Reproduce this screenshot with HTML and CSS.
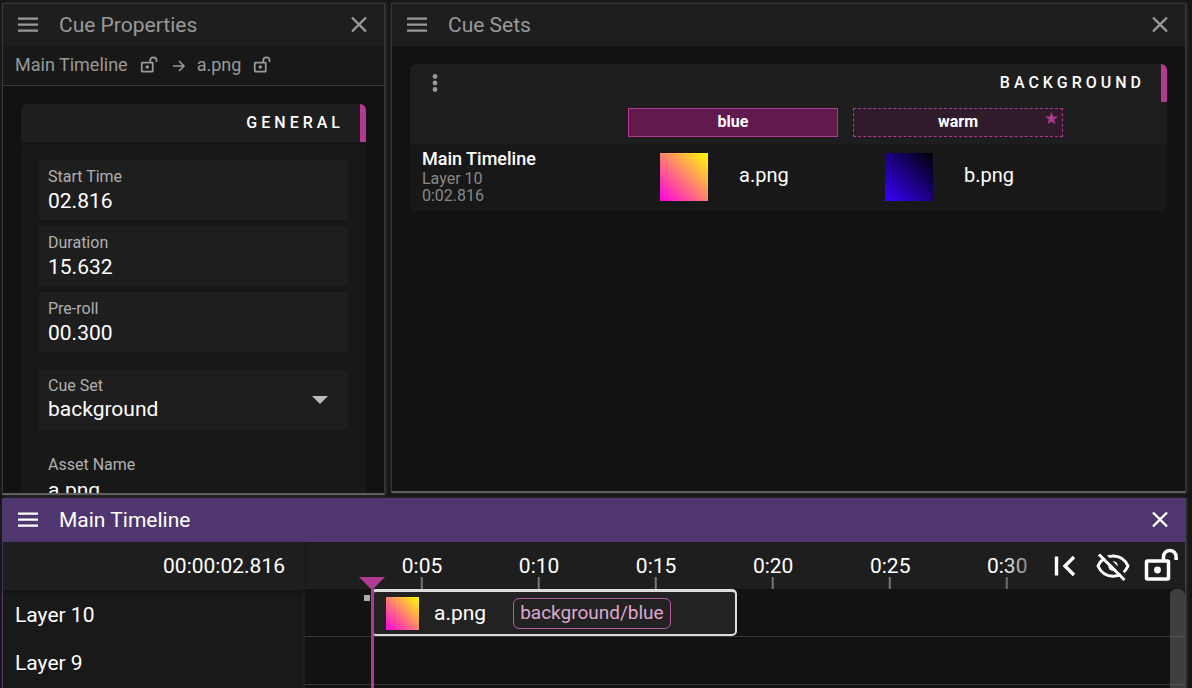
FILE: index.html
```html
<!DOCTYPE html>
<html lang="en">
<head>
    <meta charset="UTF-8">
    <meta name="viewport" content="width=device-width, initial-scale=1.0">
    <title>Main Timeline</title>
    <link rel="stylesheet" href="styles.css">
</head>
<body>
    <svg class="defs" aria-hidden="true">
        <symbol id="icon-menu" viewBox="0 0 24 24">
            <path d="M2 4.500h20v2.200H2zM2 10.500h20v2.200H2zM2 16.500h20v2.200H2z" fill="currentColor"/>
        </symbol>
        <symbol id="icon-close" viewBox="0 0 24 24">
            <path d="M5 4.500l14 14M19 4.500L5 18.500" fill="none" stroke="currentColor" stroke-width="2.400"/>
        </symbol>
        <symbol id="icon-unlock" viewBox="0 0 36 36">
            <rect x="3.500" y="13" width="22" height="18" rx="1" fill="none" stroke="currentColor" stroke-width="3.500"/>
            <circle cx="14.500" cy="22" r="3.400" fill="currentColor"/>
            <path d="M20.500 13V8.800a6.300 6.300 0 0 1 12.600 0V12" fill="none" stroke="currentColor" stroke-width="3.500"/>
        </symbol>
    </svg>

    <main class="workspace">
        <section class="panel cue-properties">
            <header class="panel-header">
                <button class="icon-button" aria-label="Menu"><svg><use href="#icon-menu"/></svg></button>
                <h2>Cue Properties</h2>
                <button class="icon-button" aria-label="Close"><svg><use href="#icon-close"/></svg></button>
            </header>
            <nav class="breadcrumb">
                <a href="#timeline">Main Timeline</a>
                <button class="lock-button" aria-label="Lock timeline"><svg><use href="#icon-unlock"/></svg></button>
                <svg class="arrow" viewBox="0 0 14 14"><path d="M1 7h11M7 2l5 5-5 5" fill="none" stroke="currentColor" stroke-width="1.600"/></svg>
                <a href="#cue">a.png</a>
                <button class="lock-button" aria-label="Lock cue"><svg><use href="#icon-unlock"/></svg></button>
            </nav>
            <div class="panel-body">
                <form class="card general">
                    <h3 class="card-header">General</h3>
                    <div class="fields">
                        <div class="field">
                            <label for="startTime">Start Time</label>
                            <input type="text" id="startTime" value="02.816">
                        </div>
                        <div class="field">
                            <label for="duration">Duration</label>
                            <input type="text" id="duration" value="15.632">
                        </div>
                        <div class="field">
                            <label for="preRoll">Pre-roll</label>
                            <input type="text" id="preRoll" value="00.300">
                        </div>
                        <div class="field select-field">
                            <label for="cueSet">Cue Set</label>
                            <select id="cueSet">
                                <option>background</option>
                            </select>
                            <svg class="caret" viewBox="0 0 16 8"><path d="M0 0h16l-8 8z" fill="currentColor"/></svg>
                        </div>
                        <div class="field plain">
                            <label for="assetName">Asset Name</label>
                            <input type="text" id="assetName" value="a.png" readonly>
                        </div>
                    </div>
                </form>
            </div>
        </section>

        <section class="panel cue-sets">
            <header class="panel-header">
                <button class="icon-button" aria-label="Menu"><svg><use href="#icon-menu"/></svg></button>
                <h2>Cue Sets</h2>
                <button class="icon-button" aria-label="Close"><svg><use href="#icon-close"/></svg></button>
            </header>
            <div class="panel-body">
                <div class="card">
                    <div class="card-header">
                        <button class="more-button" aria-label="More">
                            <svg viewBox="0 0 6 18"><g fill="currentColor"><circle cx="3" cy="2.500" r="2.400"/><circle cx="3" cy="9" r="2.400"/><circle cx="3" cy="15.500" r="2.400"/></g></svg>
                        </button>
                        <h3>Background</h3>
                    </div>
                    <table>
                        <thead>
                            <tr>
                                <th class="col-cue"></th>
                                <th class="col-variant"><button class="variant active">blue</button></th>
                                <th class="col-variant">
                                    <button class="variant">warm
                                        <svg class="star" viewBox="0 0 14 14"><path d="M7 0l1.700 4.900H14L9.800 8l1.600 5.300L7 10.200l-4.400 3.100L4.200 8 0 4.900h5.300z" fill="currentColor"/></svg>
                                    </button>
                                </th>
                                <th></th>
                            </tr>
                        </thead>
                        <tbody>
                            <tr>
                                <td class="cue">
                                    <strong>Main Timeline</strong>
                                    <span>Layer 10</span>
                                    <span>0:02.816</span>
                                </td>
                                <td><div class="asset"><span class="thumb thumb-a"></span><span class="asset-name">a.png</span></div></td>
                                <td><div class="asset"><span class="thumb thumb-b"></span><span class="asset-name">b.png</span></div></td>
                                <td></td>
                            </tr>
                        </tbody>
                    </table>
                </div>
            </div>
        </section>

        <section class="panel timeline" id="timeline">
            <header class="panel-header">
                <button class="icon-button" aria-label="Menu"><svg><use href="#icon-menu"/></svg></button>
                <h2>Main Timeline</h2>
                <button class="icon-button" aria-label="Close"><svg><use href="#icon-close"/></svg></button>
            </header>
            <div class="timeline-body">
                <div class="layers">
                    <div class="clock">00:00:02.816</div>
                    <div class="layer-name">Layer 10</div>
                    <div class="layer-name">Layer 9</div>
                </div>
                <div class="tracks">
                    <!-- positions are seconds out of the visible 37.6 -->
                    <div class="ruler">
                        <span class="tick" style="left: 13.3%">0:05</span>
                        <span class="tick" style="left: 26.6%">0:10</span>
                        <span class="tick" style="left: 39.9%">0:15</span>
                        <span class="tick" style="left: 53.2%">0:20</span>
                        <span class="tick" style="left: 66.5%">0:25</span>
                        <span class="tick" style="left: 79.8%">0:30</span>
                        <div class="tools">
                            <button aria-label="Back to start">
                                <svg viewBox="0 0 36 36"><path d="M9.500 8.500v19M27 9l-9 9 9 9" fill="none" stroke="currentColor" stroke-width="3.400"/></svg>
                            </button>
                            <button aria-label="Hide played">
                                <svg viewBox="0 0 36 36">
                                    <path d="M3 18C9 4.500 27 4.500 33 18C27 31.500 9 31.500 3 18z" fill="none" stroke="currentColor" stroke-width="3"/>
                                    <circle cx="18" cy="18" r="4.800" fill="currentColor"/>
                                    <path d="M6.500 4.500l26 26" stroke="#1e1e1e" stroke-width="3.500"/>
                                    <path d="M4 6.500l25.500 25.500" stroke="currentColor" stroke-width="3"/>
                                </svg>
                            </button>
                            <button aria-label="Lock timeline"><svg><use href="#icon-unlock"/></svg></button>
                        </div>
                    </div>
                    <div class="track">
                        <span class="pre-roll" style="left: 6.7%"></span>
                        <div class="clip" style="left: 7.5%; width: 41.6%">
                            <span class="thumb thumb-a"></span>
                            <span class="clip-name">a.png</span>
                            <span class="tag">background/blue</span>
                        </div>
                    </div>
                    <div class="track"></div>
                    <div class="track"></div>
                    <div class="playhead" style="left: 7.5%"></div>
                    <div class="scrollbar"></div>
                </div>
            </div>
        </section>
    </main>
</body>
</html>
```
FILE: styles.css
```css
* {
    margin: 0;
    padding: 0;
    box-sizing: border-box;
}

body {
    background-color: #161616;
    color: #fff;
    font-family: Roboto, sans-serif;
    font-size: 21px;
    overflow: hidden;
}

button, input, select {
    background: none;
    border: none;
    color: inherit;
    font: inherit;
}

button {
    display: flex;
    align-items: center;
    justify-content: center;
    cursor: pointer;
}

a {
    color: inherit;
    text-decoration: none;
}

.defs {
    display: none;
}

.workspace {
    display: grid;
    grid-template-columns: 383px 1fr;
    grid-template-rows: 1fr 190px;
    column-gap: 6px;
    row-gap: 3px;
    height: 100vh;
    padding: 3px 6px 0 2px;
}

.panel {
    display: flex;
    flex-direction: column;
    min-width: 0;
    min-height: 0;
    background-color: #121212;
    border: 1px solid #383838;
    border-bottom: 2px solid #606060;
    box-shadow: 1px 0 3px rgba(255, 255, 255, 0.15);
}

.cue-sets {
    margin-bottom: 2px;
}

.panel-header {
    display: flex;
    align-items: center;
    flex-shrink: 0;
    height: 42px;
    padding: 0 13px;
    background-color: #1e1e1e;
    color: #999;
}

.panel-header h2 {
    flex: 1;
    margin-left: 19px;
    font-size: 21px;
    font-weight: 400;
}

.icon-button svg {
    width: 24px;
    height: 24px;
}

.breadcrumb {
    display: flex;
    align-items: center;
    flex-shrink: 0;
    height: 40px;
    padding: 0 12px 2px;
    background-color: #181818;
    border-bottom: 1px solid #383838;
    color: #999;
    font-size: 18px;
}

.lock-button {
    margin: 0 14px 0 12px;
}

.lock-button svg {
    width: 18px;
    height: 18px;
}

.arrow {
    width: 14px;
    height: 14px;
    margin-right: 11px;
    margin-top: 2px;
}

.panel-body {
    flex: 1;
    min-height: 0;
    padding: 18px;
    overflow: hidden;
}

.card {
    background-color: #181818;
    border-radius: 6px;
}

.card-header {
    display: flex;
    align-items: center;
    justify-content: flex-end;
    height: 38px;
    padding-right: 16px;
    padding-bottom: 1px;
    background-color: #1e1e1e;
    border-right: 6px solid #b03a91;
    border-radius: 6px 6px 0 0;
    box-shadow: 0 2px 5px rgba(0, 0, 0, 0.2);
}

.card-header, .card-header h3 {
    font-size: 16px;
    font-weight: 500;
    letter-spacing: 4px;
    text-transform: uppercase;
}

.more-button {
    width: 18px;
    margin-left: 16px;
    margin-right: auto;
    color: #999;
}

.more-button svg {
    width: 6px;
    height: 18px;
}

.fields {
    display: flex;
    flex-direction: column;
    gap: 6px;
    padding: 18px;
}

.field {
    height: 60px;
    padding: 6px 9px;
    background-color: #1e1e1e;
}

.field label {
    display: block;
    color: #b0b0b0;
    font-size: 16px;
    line-height: 21px;
}

.field input, .field select {
    display: block;
    width: 100%;
    height: 27px;
    outline: none;
    appearance: none;
}

.select-field {
    position: relative;
    margin: 12px 0;
    padding-top: 5px;
}

.field select {
    height: 25px;
}

.caret {
    position: absolute;
    right: 20px;
    top: 26px;
    width: 16px;
    height: 8px;
    color: #bbb;
    pointer-events: none;
}

.plain {
    background: none;
}

.plain input {
    height: 29px;
}

.thumb {
    flex-shrink: 0;
    width: 48px;
    height: 48px;
}

.thumb-a {
    background: linear-gradient(45deg, #ff00e1, #ffff00);
}

.thumb-b {
    background: linear-gradient(45deg, #3800ff, #000);
}

table {
    width: 100%;
    table-layout: fixed;
    border-collapse: collapse;
}

thead {
    background-color: #1e1e1e;
}

th {
    height: 42px;
    padding: 6px 8px 7px 7px;
}

.col-cue {
    width: 211px;
}

.col-variant {
    width: 225px;
}

.variant {
    position: relative;
    width: 100%;
    height: 29px;
    padding-bottom: 3px;
    background-color: #2f1b2a;
    border: 1px dashed #b03a91;
    font-size: 16px;
    font-weight: 700;
}

.variant.active {
    background-color: #62194e;
    border-style: solid;
}

.star {
    position: absolute;
    top: 3px;
    right: 4px;
    width: 13px;
    height: 13px;
    color: #b03a91;
}

td {
    height: 67px;
    padding-bottom: 2px;
    vertical-align: middle;
}

.cue {
    padding-left: 12px;
    padding-bottom: 4px;
    color: #888;
    font-size: 16px;
    line-height: 17px;
}

.cue strong, .cue span {
    display: block;
}

.cue strong {
    color: #fff;
    font-size: 18px;
    font-weight: 500;
    line-height: 22px;
}

.asset {
    display: flex;
    align-items: center;
    gap: 31px;
    padding-left: 39px;
    font-size: 20px;
}

.asset-name {
    padding-bottom: 4px;
}

.timeline {
    grid-column: 1 / -1;
    border: 1px solid #50366f;
    border-bottom: none;
}

.timeline .panel-header {
    height: 43px;
    padding-bottom: 2px;
    background-color: #50366f;
    color: #fff;
}

.timeline-body {
    display: flex;
    flex: 1;
    min-height: 0;
    background-color: #1e1e1e;
}

.layers {
    width: 302px;
    background-color: #191919;
    border-right: 2px solid #1e1e1e;
}

.clock {
    height: 48px;
    padding-right: 18px;
    background-color: #1e1e1e;
    box-shadow: 0 2px 5px rgba(0, 0, 0, 0.3);
    line-height: 48px;
    text-align: right;
}

.layer-name {
    height: 48px;
    padding-left: 12px;
    line-height: 50px;
}

.tracks {
    position: relative;
    flex: 1;
    min-width: 0;
    overflow: hidden;
}

.ruler {
    position: relative;
    height: 47px;
}

.tick {
    position: absolute;
    top: 0;
    height: 47px;
    line-height: 48px;
    transform: translateX(-50%);
}

.tick::after {
    content: "";
    position: absolute;
    left: 50%;
    bottom: 0;
    width: 2px;
    height: 12px;
    margin-left: -1px;
    background-color: #777;
}

.tools {
    position: absolute;
    top: 0;
    right: 0;
    display: flex;
    align-items: center;
    gap: 12px;
    height: 47px;
    padding-left: 44px;
    padding-right: 6px;
    background: linear-gradient(to right, transparent, #1e1e1e 44px);
}

.tools svg {
    display: block;
    width: 36px;
    height: 36px;
}

.track {
    position: relative;
    height: 48px;
    background-color: #121212;
    border-bottom: 1px solid #383838;
}

.pre-roll {
    position: absolute;
    top: 6px;
    width: 6px;
    height: 6px;
    background-color: #aaa;
}

.clip {
    position: absolute;
    top: 0;
    display: flex;
    align-items: center;
    height: 47px;
    padding-left: 13px;
    background-color: #222;
    border: 2px solid #ddd;
    border-top-width: 3px;
    border-radius: 5px;
}

.clip .thumb {
    width: 33px;
    height: 33px;
}

.clip-name {
    margin-left: 15px;
    font-size: 21px;
}

.tag {
    height: 31px;
    margin-left: 27px;
    padding: 0 6px;
    border: 1px solid #b55a9c;
    border-radius: 6px;
    color: #dfa8cf;
    font-size: 19px;
    line-height: 28px;
}

.playhead {
    position: absolute;
    top: 35px;
    bottom: 0;
    width: 3px;
    background-color: #b03a91;
}

.playhead::before {
    content: "";
    position: absolute;
    top: 0;
    left: -12px;
    border: 13px solid transparent;
    border-top: 13px solid #b03a91;
    border-bottom: none;
}

.scrollbar {
    position: absolute;
    top: 47px;
    right: 0;
    bottom: 0;
    width: 15px;
    background-color: rgba(120, 120, 120, 0.45);
    border-radius: 6px 6px 0 0;
}
```
